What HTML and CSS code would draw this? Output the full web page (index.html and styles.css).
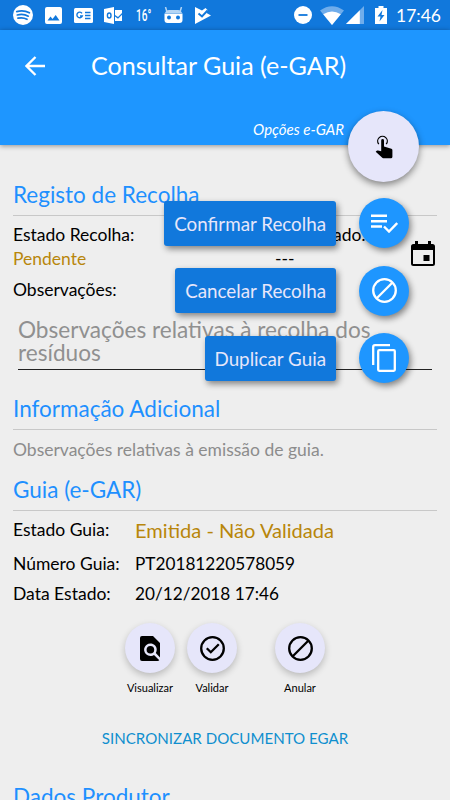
FILE: index.html
```html
<!DOCTYPE html>
<html lang="pt">
<head>
    <meta charset="UTF-8">
    <title>Consultar Guia (e-GAR)</title>
    <link rel="stylesheet" href="styles.css">
</head>

<body>
    <div class="status-bar">
        <div class="status-left">
            <svg width="20" height="20" viewBox="0 0 20 20">
                <circle cx="10" cy="10" r="10" fill="#fff"/>
                <path d="M3.7 6.6q6.8-2 12.7 1.2M4.3 10q6-1.6 11 1.2M5 13.2q5-1.2 9 1.1" fill="none" stroke="#1178dc" stroke-width="1.7" stroke-linecap="round"/>
            </svg>
            <svg width="17" height="17" viewBox="0 0 17 17">
                <path fill="#fff" fill-rule="evenodd" d="M2 0h13a2 2 0 0 1 2 2v13a2 2 0 0 1-2 2H2a2 2 0 0 1-2-2V2a2 2 0 0 1 2-2zM2.5 13.500h12L10.700 8l-3.200 4-2-2.500z"/>
            </svg>
            <svg width="19" height="15" viewBox="0 0 19 15">
                <rect width="19" height="15" rx="1.500" fill="#fff"/>
                <path d="M8 5.300A2.800 2.800 0 1 0 8.300 8H6M11 4.500h5.500M11 7.500h5.500M11 10.500h5.500" fill="none" stroke="#1178dc" stroke-width="1.400"/>
            </svg>
            <svg class="mail" width="18" height="17" viewBox="0 0 18 17">
                <path fill="#fff" d="M0 2l10-2v17L0 15zM11 3h7v3l-4 4-3-2zM11 9.500l3 2.200 4-4V14h-7z"/>
                <ellipse cx="5.200" cy="8.500" rx="1.800" ry="2.500" fill="none" stroke="#1178dc" stroke-width="1.400"/>
            </svg>
            <span class="temperature"><span>16°</span></span>
            <svg width="19" height="17" viewBox="0 0 19 17">
                <path d="M1.500 0l1.500 5M17.500 0l-1.500 5" stroke="#b5d6f5" stroke-width="1.500"/>
                <path fill="#b5d6f5" d="M1 6q1-3 4-3h9q3 0 4 3z"/>
                <path fill="#fff" d="M.5 6.500h18V13q0 3-3 3h-12q-3 0-3-3z"/>
                <circle cx="5" cy="10.500" r="2" fill="#1178dc"/>
                <circle cx="14" cy="10.500" r="2" fill="#1178dc"/>
            </svg>
            <svg width="16" height="17" viewBox="0 0 16 17">
                <path fill="#fff" d="M0 0l7 3.500L10.500 1l2 2-1 3L16 8.500 0 17z"/>
                <path d="M3.500 6.500L7 9.500l5.500-6" fill="none" stroke="#1178dc" stroke-width="1.900"/>
            </svg>
        </div>
        <div class="status-right">
            <svg width="18" height="18" viewBox="0 0 18 18">
                <circle cx="9" cy="9" r="9" fill="#fff"/>
                <path d="M4.500 9h9" stroke="#1178dc" stroke-width="1.800"/>
            </svg>
            <svg class="wifi" width="24" height="19" viewBox="0 0 24 19">
                <path fill="#70adeb" d="M0 4.500Q12-4 24 4.500L12 19z"/>
                <path fill="#fff" d="M3.200 8.300Q12 2.500 20.800 8.300L12 19z"/>
            </svg>
            <svg class="signal" width="18" height="18" viewBox="0 0 18 18">
                <path fill="#70adeb" d="M18 0v18H0z"/>
                <path fill="#fff" d="M13.800 4.200V18H0z"/>
            </svg>
            <svg class="battery" width="12" height="18" viewBox="0 0 12 18">
                <path fill="#fff" d="M3.500 0h5v2H12v16H0V2h3.500z"/>
                <path fill="#1178dc" d="M7.500 4L2.500 10.500h3L4.500 15.500l5-6.500h-3z"/>
            </svg>
            <span class="clock">17:46</span>
        </div>
    </div>

    <header class="app-bar">
        <div class="title-row">
            <svg class="back" width="20" height="20" viewBox="0 0 20 20">
                <path d="M20 10H2M10.500 1L1.500 10l9 9" fill="none" stroke="#fff" stroke-width="2.300"/>
            </svg>
            <h1>Consultar Guia (e-GAR)</h1>
        </div>
        <p class="options-label">Opções e-GAR</p>
    </header>

    <main class="content">
        <section class="pickup">
            <h2>Registo de Recolha</h2>
            <div class="pickup-row">
                <div class="pickup-state">
                    <p>Estado Recolha:</p>
                    <p class="pending">Pendente</p>
                </div>
                <div class="pickup-date">
                    <p>Data Estado:</p>
                    <p class="dashes">---</p>
                </div>
                <svg class="calendar" width="24" height="26" viewBox="0 0 24 26">
                    <path fill="#000" fill-rule="evenodd" d="M4 0h3v3h10V0h3v3h1.500A2.500 2.500 0 0 1 24 5.500v17a2.500 2.500 0 0 1-2.500 2.500h-19A2.500 2.500 0 0 1 0 22.500v-17A2.500 2.500 0 0 1 2.500 3H4zM2 9v14h20V9zM12.500 14h6v6h-6z"/>
                </svg>
            </div>
            <p class="notes-label">Observações:</p>
            <div class="notes-field">Observações relativas à recolha dos resíduos</div>
        </section>

        <section class="info">
            <h2>Informação Adicional</h2>
            <p class="info-text">Observações relativas à emissão de guia.</p>
        </section>

        <section class="guide">
            <h2>Guia (e-GAR)</h2>
            <dl class="guide-data">
                <dt>Estado Guia:</dt>
                <dd class="guide-state">Emitida - Não Validada</dd>
                <dt>Número Guia:</dt>
                <dd class="guide-number">PT20181220578059</dd>
                <dt>Data Estado:</dt>
                <dd class="guide-date">20/12/2018 17:46</dd>
            </dl>
            <div class="actions">
                <div class="action">
                    <button class="round">
                        <svg width="20" height="25" viewBox="0 0 20 25">
                            <path d="M2 0h11l7 7v14.500L15.800 17A6.300 6.300 0 1 0 14 18.900l5.300 5.300q-.6.800-1.800.8H2a2 2 0 0 1-2-2V2a2 2 0 0 1 2-2z"/>
                            <circle cx="10.400" cy="13.700" r="3.800"/>
                        </svg>
                    </button>
                    <span>Visualizar</span>
                </div>
                <div class="action">
                    <button class="round">
                        <svg width="25" height="25" viewBox="0 0 25 25" fill="none" stroke="#000" stroke-width="2.300">
                            <circle cx="12.500" cy="12.500" r="11.300"/>
                            <path d="M6.800 12.200l4 4 8-8"/>
                        </svg>
                    </button>
                    <span>Validar</span>
                </div>
                <div class="action cancel">
                    <button class="round">
                        <svg width="25" height="25" viewBox="0 0 25 25" fill="none" stroke="#000" stroke-width="2.300">
                            <circle cx="12.500" cy="12.500" r="11.300"/>
                            <path d="M4.500 20.500l16-16"/>
                        </svg>
                    </button>
                    <span>Anular</span>
                </div>
            </div>
            <a class="sync">SINCRONIZAR DOCUMENTO EGAR</a>
        </section>

        <section class="producer">
            <h2>Dados Produtor</h2>
        </section>
    </main>

    <div class="fab-menu">
        <button class="fab">
            <svg width="18" height="24" viewBox="0 0 18 24">
                <path d="M3.800 9.200a4.800 4.800 0 1 1 7.400 0" fill="none" stroke="#000" stroke-width="1.300"/>
                <path d="M6.200 5.500a1.400 1.400 0 0 1 2.800 0v6l7.400 2.200q1 .4 1 1.500v6.500q0 1.500-1.500 1.500H8.300q-.8 0-1.300-.6L.7 16.800l1-1q.5-.5 1.300-.2L6.200 16.300z"/>
            </svg>
        </button>
        <div class="fab-item">
            <span class="fab-label">Confirmar Recolha</span>
            <button class="mini">
                <svg width="27" height="19" viewBox="0 0 27 19" fill="none" stroke="#fff" stroke-width="2.400">
                    <path d="M0 1.800h16M0 7.300h16M0 12.500h11M13 12.500l5 5 8.200-8.500"/>
                </svg>
            </button>
        </div>
        <div class="fab-item">
            <span class="fab-label">Cancelar Recolha</span>
            <button class="mini">
                <svg width="25" height="25" viewBox="0 0 25 25" fill="none" stroke="#fff" stroke-width="2.300">
                    <circle cx="12.500" cy="12.500" r="11.300"/>
                    <path d="M4.500 20.500l16-16"/>
                </svg>
            </button>
        </div>
        <div class="fab-item">
            <span class="fab-label">Duplicar Guia</span>
            <button class="mini">
                <svg width="24" height="28" viewBox="0 0 24 28" fill="none" stroke="#fff" stroke-width="2.300">
                    <path d="M1.200 21V3q0-1.800 1.800-1.800h15"/>
                    <rect x="6.200" y="6.200" width="16.600" height="20.600" rx="1"/>
                </svg>
            </button>
        </div>
    </div>
</body>
</html>
```
FILE: styles.css
```css
* {
    box-sizing: border-box;
    margin: 0;
    padding: 0;
}

body {
    position: relative;
    width: 450px;
    height: 800px;
    overflow: hidden;
    background-color: #eee;
    font-family: Lato, sans-serif;
    font-size: 17.5px;
    color: #000;
}

svg {
    display: block;
    flex-shrink: 0;
}

button {
    border: none;
    display: flex;
    align-items: center;
    justify-content: center;
    flex-shrink: 0;
}

.status-bar {
    height: 30px;
    background-color: #1178dc;
    color: #fff;
    display: flex;
    align-items: center;
    justify-content: space-between;
    padding: 0 10px 0 13px;
}

.status-left,
.status-right {
    display: flex;
    align-items: center;
}

.status-left {
    gap: 12px;
}

.mail {
    margin-left: -1px;
}

.temperature {
    width: 16px;
    margin: 0 0 0 2px;
    font-family: Roboto, sans-serif;
    font-size: 16px;
    font-weight: 500;
}

.temperature span {
    display: inline-block;
    transform: scaleX(0.63);
    transform-origin: left;
}

.wifi {
    margin-left: 8px;
}

.signal {
    margin-left: 2px;
}

.battery {
    margin-left: 11px;
}

.clock {
    width: 44px;
    margin-left: 9px;
    font-size: 17.5px;
    white-space: nowrap;
}

.app-bar {
    height: 115px;
    background-color: #1e96ff;
    color: #fff;
    box-shadow: 0 1px 5px rgba(0, 0, 0, 0.4);
}

.title-row {
    height: 71px;
    display: flex;
    align-items: center;
    gap: 46px;
    padding-left: 25px;
}

h1 {
    margin-top: -1px;
    font-size: 25.1px;
    font-weight: 400;
    white-space: nowrap;
}

.options-label {
    padding: 18px 106px 0 0;
    text-align: right;
    font-size: 15px;
    line-height: 20px;
    font-style: italic;
}

.content {
    padding: 29px 13px 0;
}

h2 {
    height: 42px;
    border-bottom: 1px solid #c8c8c8;
    font-size: 22.5px;
    line-height: 42px;
    font-weight: 400;
    color: #1e90ff;
}

.pickup {
    height: 214px;
}

.pickup-row {
    display: flex;
    line-height: 24px;
    padding-top: 7px;
}

.pickup-state {
    width: 255px;
}

.pickup-date {
    width: 143px;
}

.dashes {
    padding-left: 7px;
}

.pending {
    color: #b8860b;
}

.calendar {
    margin-top: 18px;
}

.notes-label {
    margin-top: 7px;
    line-height: 24px;
}

.notes-field {
    height: 68px;
    margin: 0 5px;
    padding: 16px 0 0;
    border-bottom: 1px solid #222;
    font-size: 22.6px;
    line-height: 23px;
    color: #909090;
}

.info {
    height: 81px;
}

.info-text {
    margin-top: 8px;
    line-height: 24px;
    color: #8c8c8c;
}

.guide-data {
    display: grid;
    grid-template-columns: 122px 1fr;
    grid-template-rows: 35px 30px 30px;
    align-items: center;
    padding-top: 2px;
}

.guide-data dt:first-child,
.guide-state {
    padding-bottom: 2px;
}

.guide-state {
    font-size: 20.1px;
    color: #b8860b;
}

.guide-number,
.guide-date {
    font-size: 17.2px;
}

.actions {
    display: flex;
    gap: 12px;
    margin: 15px 0 0 112px;
}

.action {
    width: 50px;
    display: flex;
    flex-direction: column;
    align-items: center;
    gap: 8px;
    font-size: 11px;
    line-height: 14px;
}

.action.cancel {
    margin-left: 26px;
}

.round {
    width: 50px;
    height: 50px;
    border-radius: 50%;
    background-color: #e6e6fa;
    box-shadow: 0 3px 7px rgba(0, 0, 0, 0.22);
}

.sync {
    display: block;
    margin-top: 33px;
    text-align: center;
    font-size: 15.1px;
    line-height: 20px;
    color: #0f8fce;
}

.producer {
    margin-top: 28px;
}

/* floating menu, lies over the header and the form */
.fab-menu {
    position: absolute;
    top: 111px;
    right: 31px;
    display: flex;
    flex-direction: column;
    align-items: flex-end;
}

.fab {
    width: 71px;
    height: 71px;
    margin-bottom: 16px;
    border-radius: 50%;
    background-color: #e6e6fa;
    box-shadow: 0 3px 7px rgba(0, 0, 0, 0.45);
}

.fab-item {
    height: 50px;
    margin: 0 10px 17.5px 0;
    display: flex;
    align-items: center;
    gap: 23px;
}

.fab-label {
    height: 45px;
    border-radius: 3px;
    padding: 0 10px;
    background-color: #1178dc;
    box-shadow: 2px 3px 6px rgba(0, 0, 0, 0.45);
    color: #e6e6fa;
    font-size: 18.8px;
    line-height: 46px;
    white-space: nowrap;
}

.mini {
    width: 50px;
    height: 50px;
    border-radius: 50%;
    background-color: #1e96ff;
    box-shadow: 2px 3px 6px rgba(0, 0, 0, 0.45);
}
```
